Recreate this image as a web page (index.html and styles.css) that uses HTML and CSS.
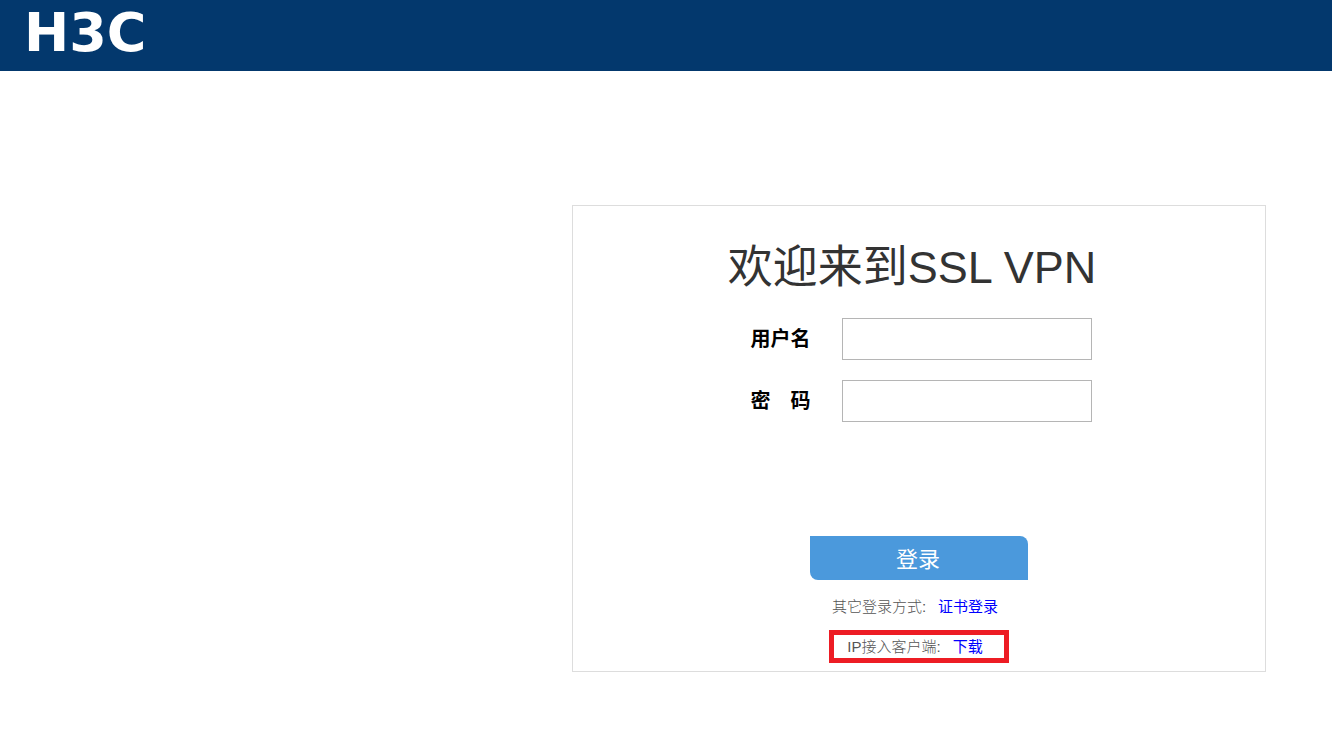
FILE: index.html
```html
<!DOCTYPE html>
<html lang="zh-CN">
<head>
    <meta charset="UTF-8">
    <meta name="viewport" content="width=device-width, initial-scale=1.0">
    <title>SSL VPN</title>
    <link rel="stylesheet" href="styles.css">
</head>
<body>
    <header class="header">
        <div class="logo">H3C</div>
    </header>

    <main class="login-box">
        <h1 class="title">欢迎来到SSL VPN</h1>
        <form id="login-form" class="login-form">
            <div class="form-row">
                <label for="username">用户名</label>
                <input type="text" id="username" name="username">
            </div>
            <div class="form-row">
                <label for="password">密　码</label>
                <input type="password" id="password" name="password">
            </div>
            <button class="login-btn" type="submit">登录</button>
        </form>
        <p class="other-login">其它登录方式:<a href="#cert">证书登录</a></p>
        <p class="other-login download">IP接入客户端:<a href="#download">下载</a></p>
    </main>
</body>
</html>
```
FILE: styles.css
```css
* {
    box-sizing: border-box;
}

body {
    margin: 0;
    background: #fff;
    font-family: "Liberation Sans", "Noto Sans CJK SC", sans-serif;
}

.header {
    display: flex;
    height: 71px;
    padding: 4px 24px;
    background: #03386d;
}

.logo {
    font-family: "DejaVu Sans", sans-serif;
    font-size: 54px;
    font-weight: bold;
    line-height: 58px;
    color: #fff;
}

.login-box {
    display: flex;
    flex-direction: column;
    align-items: center;
    width: 90%;
    max-width: 694px;
    margin: 134px 66px 40px auto;
    padding: 32px 0 8px;
    border: 1px solid #ddd;
}

.title {
    margin: 0 14px 20px 0;
    font-size: 45px;
    font-weight: normal;
    line-height: 60px;
    color: #333;
}

.login-form {
    display: flex;
    flex-direction: column;
    align-items: center;
    gap: 20px;
}

.form-row {
    display: flex;
    align-items: center;
    padding-left: 4px;
}

.form-row label {
    width: 91px;
    font-size: 20px;
    font-weight: bold;
    line-height: 40px;
    color: #000;
}

.form-row input {
    width: 250px;
    height: 42px;
    padding: 0 10px;
    border: 1px solid #b5b5b5;
    font-size: 16px;
}

.login-btn {
    width: 218px;
    height: 44px;
    margin-top: 94px;
    padding: 0 2px 2px 0;
    border: none;
    border-radius: 0 8px;
    background: #4b99dc;
    color: #fff;
    font-family: inherit;
    font-size: 22px;
    cursor: pointer;
}

.other-login {
    margin: 15px 0 0;
    padding-right: 8px;
    font-size: 15px;
    font-weight: 300;
    line-height: 24px;
    color: #555;
}

.other-login a {
    margin-left: 12px;
    color: #00f;
    font-weight: normal;
    text-decoration: none;
}

/* highlighted client download */
.download {
    width: 180px;
    margin-top: 11px;
    border: 5px solid #ed1c24;
    line-height: 23px;
    text-align: center;
}
```
